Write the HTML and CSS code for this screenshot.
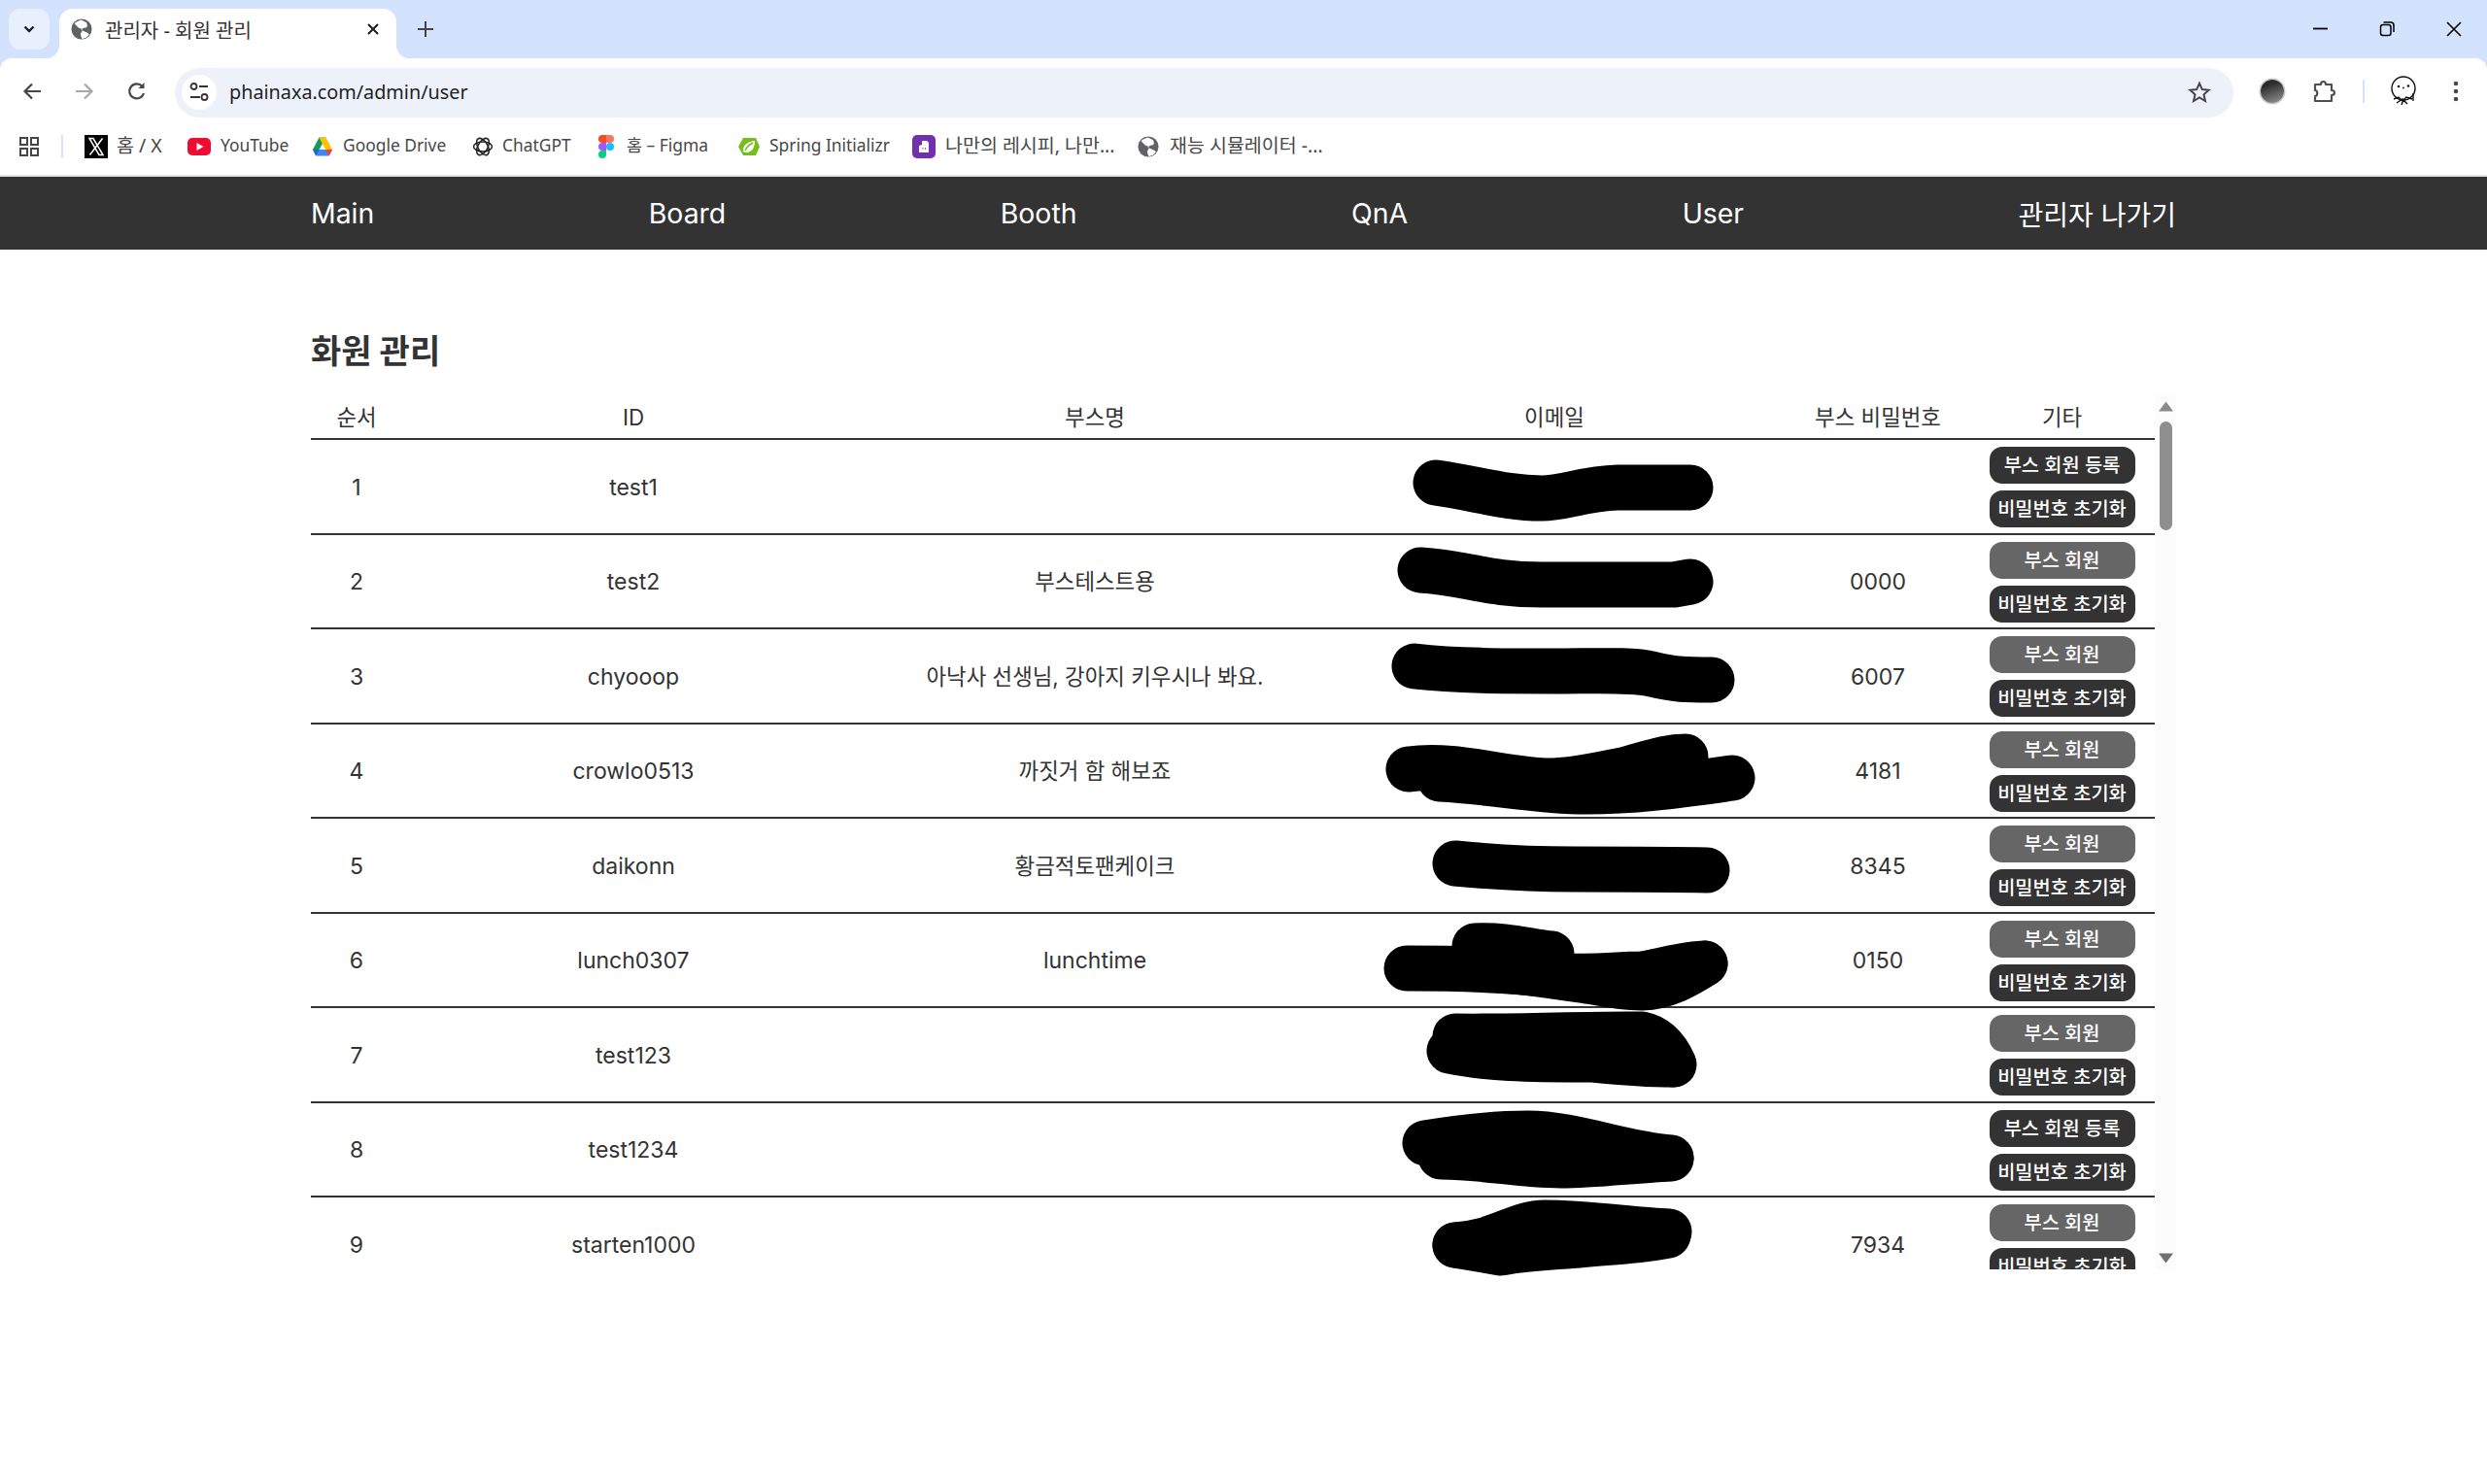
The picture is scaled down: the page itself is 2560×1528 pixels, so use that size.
FILE: index.html
```html
<!DOCTYPE html>
<html lang="ko">
<head>
<meta charset="utf-8">
<title>관리자 - 회원 관리</title>
<link rel="stylesheet" href="styles.css">
</head>
<body>
<svg class="defs" width="0" height="0" aria-hidden="true">
  <symbol id="globe" viewBox="0 0 24 24">
    <circle cx="12" cy="12" r="11.5" fill="#5f6368"/>
    <path d="M11 1.5C8 3 5.5 3.5 4 5.5 6 8 7 8.5 8 10c1.5 1 4 1 5 3 0 2-2.500 3-2 5 0 2 1 3.500 1.500 5 3-.5 6-2 8-5-1-2-3.500-2.500-5.500-3.500-1.500-1-3.500-.5-3.500-2.500 2-1 4-2 6-2 1-.5 1-3.500 0-5.500-2-1-4-2.500-6.500-3z" fill="#fff"/>
  </symbol>
</svg>

<header class="browser">
  <div class="tabstrip">
    <div class="tabsearch"><svg class="ico" width="16" height="16" viewBox="0 0 16 16"><path d="M3.500 5.500l4.500 4.500 4.500-4.500" fill="none" stroke="#1f1f1f" stroke-width="2.400"/></svg></div>
    <div class="tab">
      <svg class="favicon" width="22" height="22"><use href="#globe"/></svg>
      <span class="tabtitle">관리자 - 회원 관리</span>
      <svg class="tabclose" width="14" height="14" viewBox="0 0 14 14"><path d="M2 2l10 10M12 2L2 12" stroke="#1f1f1f" stroke-width="2"/></svg>
    </div>
    <svg class="newtab" width="18" height="18" viewBox="0 0 18 18"><path d="M9 1v16M1 9h16" stroke="#444" stroke-width="2"/></svg>
    <div class="winctrls">
      <div class="winbtn"><svg width="16" height="16" viewBox="0 0 16 16"><path d="M1 7.500h15" stroke="#000" stroke-width="1.800"/></svg></div>
      <div class="winbtn"><svg width="16" height="16" viewBox="0 0 16 16"><rect x="1.500" y="3.500" width="10.500" height="11" rx="2.500" fill="none" stroke="#000" stroke-width="1.500"/><path d="M4.500 1h7.500a3 3 0 0 1 3 3v7" fill="none" stroke="#000" stroke-width="1.500"/></svg></div>
      <div class="winbtn"><svg width="16" height="16" viewBox="0 0 16 16"><path d="M1 1l14 14M15 1L1 15" stroke="#000" stroke-width="1.600"/></svg></div>
    </div>
  </div>

  <div class="toolbar">
    <div class="tbtn"><svg width="24" height="24" viewBox="0 0 24 24"><path d="M21 12H5M12 4.500L4.500 12l7.500 7.500" fill="none" stroke="#474747" stroke-width="2.200"/></svg></div>
    <div class="tbtn"><svg width="24" height="24" viewBox="0 0 24 24"><path d="M3 12h16M12 4.500l7.500 7.500-7.500 7.500" fill="none" stroke="#a8a8a8" stroke-width="2.200"/></svg></div>
    <div class="tbtn"><svg width="24" height="24" viewBox="0 0 24 24"><path d="M19 14a7.500 7.500 0 1 1-1.500-7" fill="none" stroke="#474747" stroke-width="2.200"/><path d="M19.500 3v6h-6z" fill="#474747"/></svg></div>
    <div class="omnibox">
      <div class="siteinfo"><svg width="20" height="22" viewBox="0 0 20 22"><circle cx="4.500" cy="5" r="3" fill="none" stroke="#333" stroke-width="1.800"/><path d="M10 5h9M1 16h10" stroke="#333" stroke-width="2"/><circle cx="15.500" cy="16" r="3" fill="none" stroke="#333" stroke-width="1.800"/></svg></div>
      <span class="url">phainaxa.com/admin/user</span>
      <svg class="star" width="24" height="24" viewBox="0 0 24 24"><path d="M12 2.800l2.800 6.300 6.800.7-5.100 4.500 1.500 6.700-6-3.500-6 3.500 1.500-6.700L2.400 9.800l6.800-.7z" fill="none" stroke="#474747" stroke-width="2"/></svg>
    </div>
    <div class="tbtn tbtn-first"><span class="extdot"></span></div>
    <div class="tbtn"><svg width="26" height="26" viewBox="0 0 26 26"><path d="M3 6h6c0-4 5-4 5 0h6v6c4 0 4 5 0 5v6H3v-5c3 0 3-6 0-6z" fill="none" stroke="#505050" stroke-width="2.200" stroke-linejoin="round"/></svg></div>
    <span class="tbdivider"></span>
    <div class="tbtn"><svg width="30" height="32" viewBox="0 0 30 32"><circle cx="15" cy="13" r="12" fill="#fff" stroke="#111" stroke-width="1.400"/><circle cx="10" cy="11" r="1.300" fill="#111"/><circle cx="20" cy="10.500" r="1.300" fill="#111"/><circle cx="15" cy="12.500" r=".9" fill="#111"/><path d="M5 24l5-2 4 4 4-4 6 2M8 28l6-4 5 5M15 24l-2 6M25 18v8" fill="none" stroke="#111" stroke-width="1.400"/></svg></div>
    <div class="tbtn"><svg width="8" height="24" viewBox="0 0 8 24"><circle cx="4" cy="4" r="2.300" fill="#474747"/><circle cx="4" cy="12" r="2.300" fill="#474747"/><circle cx="4" cy="20" r="2.300" fill="#474747"/></svg></div>
  </div>

  <nav class="bookmarks">
    <svg class="apps" width="20" height="20" viewBox="0 0 20 20"><g fill="none" stroke="#474747" stroke-width="2"><rect x="1" y="1" width="7" height="7"/><rect x="12" y="1" width="7" height="7"/><rect x="1" y="12" width="7" height="7"/><rect x="12" y="12" width="7" height="7"/></g></svg>
    <span class="bmdivider"></span>
    <div class="bm bm-x"><svg width="24" height="24" viewBox="0 0 24 24"><rect width="24" height="24" fill="#000"/><path d="M5 3.500h4l10 17h-4zM18.500 3.500L5.500 20.500" fill="none" stroke="#fff" stroke-width="1.500"/></svg><span class="bmko">홈 / X</span></div>
    <div class="bm bm-yt"><svg width="24" height="24" viewBox="0 0 24 24"><rect y="3" width="24" height="18" rx="5" fill="#f00b32"/><path d="M9.500 8l7 4-7 4z" fill="#fff"/></svg><span>YouTube</span></div>
    <div class="bm bm-dr"><svg width="22" height="22" viewBox="0 0 22 22"><path d="M7.500 1.500h7L7.500 14H1z" fill="#0f9d58"/><path d="M14.500 1.500L21 14h-7L7.500 1.500z" fill="#ffc107"/><path d="M1 14h20l-3.300 6.500H4.300z" fill="#4285f4"/><path d="M1 14h6.500l-3.200 6.500z" fill="#1967d2"/><path d="M14 14h7l-3.300 6.500z" fill="#ea4335"/></svg><span>Google Drive</span></div>
    <div class="bm bm-gpt"><svg width="22" height="22" viewBox="0 0 22 22"><g fill="none" stroke="#222" stroke-width="1.500"><ellipse cx="11" cy="11" rx="9.500" ry="5"/><ellipse cx="11" cy="11" rx="9.500" ry="5" transform="rotate(60 11 11)"/><ellipse cx="11" cy="11" rx="9.500" ry="5" transform="rotate(120 11 11)"/></g></svg><span>ChatGPT</span></div>
    <div class="bm bm-fg"><svg width="16" height="24" viewBox="0 0 16 24"><path d="M8 0H4a4 4 0 0 0 0 8h4z" fill="#f24e1e"/><path d="M8 0h4a4 4 0 0 1 0 8H8z" fill="#ff7262"/><path d="M8 8H4a4 4 0 0 0 0 8h4z" fill="#a259ff"/><circle cx="12" cy="12" r="4" fill="#1abcfe"/><path d="M8 16H4a4 4 0 1 0 4 4z" fill="#0acf83"/></svg><span>홈 – Figma</span></div>
    <div class="bm bm-sp"><svg width="24" height="24" viewBox="0 0 24 24"><path d="M6 3h13l4 9-4 9H6l-5-9z" fill="#77bc1f"/><path d="M6 17c-1-6 4-10 12-11 0 7-3 12-9 12-2 0-3-1-3-1z" fill="#fff"/><path d="M8 16c2-4 4-6 8-8" stroke="#77bc1f" stroke-width="1.500" fill="none"/></svg><span>Spring Initializr</span></div>
    <div class="bm bm-re"><svg width="24" height="24" viewBox="0 0 24 24"><rect width="24" height="24" rx="5" fill="#7030b0"/><path d="M7 18v-7l3-1V6h5l2 2v10z" fill="#fff"/><path d="M10.500 14h1M13 14h1" stroke="#7030b0" stroke-width="1.500"/></svg><span class="bmko">나만의 레시피, 나만...</span></div>
    <div class="bm bm-gl"><svg width="22" height="22"><use href="#globe"/></svg><span class="bmko">재능 시뮬레이터 -...</span></div>
  </nav>
</header>

<nav class="sitenav">
  <a>Main</a><a>Board</a><a>Booth</a><a>QnA</a><a>User</a><a class="navko">관리자 나가기</a>
</nav>

<main class="content">
  <h1 class="pagetitle">화원 관리</h1>
  <div class="tablebox">
    <div class="tablescroll">
      <table class="users">
        <colgroup><col class="c1"><col class="c2"><col class="c3"><col class="c4"><col class="c5"><col class="c6"></colgroup>
        <thead><tr><th class="ko">순서</th><th>ID</th><th class="ko">부스명</th><th class="ko">이메일</th><th class="ko">부스 비밀번호</th><th class="ko">기타</th></tr></thead>
        <tbody>
          <tr><td>1</td><td>test1</td><td class="ko"></td><td></td><td></td><td><div class="acts"><button class="btn">부스 회원 등록</button><button class="btn">비밀번호 초기화</button></div></td></tr>
          <tr><td>2</td><td>test2</td><td class="ko">부스테스트용</td><td></td><td>0000</td><td><div class="acts"><button class="btn off">부스 회원</button><button class="btn">비밀번호 초기화</button></div></td></tr>
          <tr><td>3</td><td>chyooop</td><td class="ko">아낙사 선생님, 강아지 키우시나 봐요.</td><td></td><td>6007</td><td><div class="acts"><button class="btn off">부스 회원</button><button class="btn">비밀번호 초기화</button></div></td></tr>
          <tr><td>4</td><td>crowlo0513</td><td class="ko">까짓거 함 해보죠</td><td></td><td>4181</td><td><div class="acts"><button class="btn off">부스 회원</button><button class="btn">비밀번호 초기화</button></div></td></tr>
          <tr><td>5</td><td>daikonn</td><td class="ko">황금적토팬케이크</td><td></td><td>8345</td><td><div class="acts"><button class="btn off">부스 회원</button><button class="btn">비밀번호 초기화</button></div></td></tr>
          <tr><td>6</td><td>lunch0307</td><td>lunchtime</td><td></td><td>0150</td><td><div class="acts"><button class="btn off">부스 회원</button><button class="btn">비밀번호 초기화</button></div></td></tr>
          <tr><td>7</td><td>test123</td><td class="ko"></td><td></td><td></td><td><div class="acts"><button class="btn off">부스 회원</button><button class="btn">비밀번호 초기화</button></div></td></tr>
          <tr><td>8</td><td>test1234</td><td class="ko"></td><td></td><td></td><td><div class="acts"><button class="btn">부스 회원 등록</button><button class="btn">비밀번호 초기화</button></div></td></tr>
          <tr><td>9</td><td>starten1000</td><td class="ko"></td><td></td><td>7934</td><td><div class="acts"><button class="btn off">부스 회원</button><button class="btn">비밀번호 초기화</button></div></td></tr>
        </tbody>
      </table>
    </div>
    <div class="scrollbar">
      <svg class="arrow" width="15" height="11" viewBox="0 0 15 11"><path d="M7.500 .5L15 10.500H0z" fill="#8a8a8a"/></svg>
      <div class="thumb"></div>
      <svg class="arrow arrow-down" width="15" height="11" viewBox="0 0 15 11"><path d="M7.500 10.500L15 .5H0z" fill="#707070"/></svg>
    </div>
  </div>
</main>

<svg class="scribbles" width="2560" height="1528" viewBox="0 0 2560 1528" aria-hidden="true">
  <g fill="none" stroke="#000" stroke-width="47" stroke-linecap="round" stroke-linejoin="round">
    <path d="M1478 497C1520 503 1550 513 1587 513C1610 513 1630 503 1665 502C1690 502 1710 502 1740 502"/>
    <path d="M1462 587C1510 590 1530 602 1587 602C1640 602 1680 602 1723 602L1740 599"/>
    <path d="M1456 686C1500 691 1550 691 1600 691C1640 691 1680 689 1700 694C1725 700 1735 700 1762 700"/>
    <path d="M1450 792C1500 785 1550 804 1597 804C1620 804 1650 797 1670 793C1700 785 1715 779 1735 779"/>
    <path d="M1482 802C1540 805 1580 815 1633 815C1680 815 1720 810 1783 801"/>
    <path d="M1498 889C1540 893 1570 895 1620 895C1670 895 1720 895 1757 896"/>
    <path d="M1448 997C1500 997 1550 998 1600 1004C1640 1008 1660 1003 1690 1003C1710 1000 1735 992 1755 992"/>
    <path d="M1533 998C1570 1000 1600 1005 1640 1011C1660 1015 1675 1017 1690 1017C1715 1016 1735 1005 1755 992"/>
    <path d="M1518 974C1550 972 1575 980 1597 982"/>
    <path d="M1498 1067C1560 1068 1640 1064 1690 1065C1705 1068 1715 1078 1723 1096"/>
    <path d="M1492 1082C1530 1090 1570 1091 1640 1091C1670 1094 1690 1096 1722 1096"/>
    <path d="M1500 1075L1700 1080"/>
    <path d="M1467 1177C1510 1170 1540 1167 1573 1167C1620 1167 1670 1188 1720 1192"/>
    <path d="M1483 1191C1530 1191 1560 1200 1607 1200C1640 1200 1680 1195 1720 1193"/>
    <path d="M1498 1282C1540 1280 1560 1259 1590 1259C1630 1259 1680 1266 1718 1268"/>
    <path d="M1498 1282L1545 1290C1570 1285 1600 1284 1625 1282C1665 1278 1690 1278 1717 1272"/>
  </g>
</svg>
</body>
</html>
```
FILE: styles.css
```css
* { box-sizing: border-box; }
html, body { margin: 0; padding: 0; }
body {
  background: #fff;
  color: #333;
  font-family: Inter, "Noto Sans CJK KR", sans-serif;
  width: 2560px;
  height: 1528px;
  overflow: hidden;
  position: relative;
}
.defs { position: absolute; }
svg { display: block; flex: none; }

/* browser chrome */
.browser {
  font-family: "Noto Sans", "Noto Sans CJK KR", sans-serif;
  height: 182px;
  background: #d3e3fd;
  display: flex;
  flex-direction: column;
}
.tabstrip {
  height: 60px;
  display: flex;
  align-items: flex-end;
  padding-left: 9px;
  flex: none;
}
.tabsearch {
  width: 42px;
  height: 42px;
  margin-bottom: 9px;
  border-radius: 12px;
  background: #e8f0fe;
  display: flex;
  align-items: center;
  justify-content: center;
}
.tab {
  width: 347px;
  height: 51px;
  margin-left: 10px;
  background: #fff;
  border-radius: 14px 14px 0 0;
  display: flex;
  align-items: center;
  padding: 0 17px 9px 12px;
  position: relative;
}
.tab::before, .tab::after {
  content: "";
  position: absolute;
  bottom: 0;
  width: 14px;
  height: 14px;
}
.tab::before { left: -14px; background: radial-gradient(circle at 0 0, transparent 14px, #fff 14.500px); }
.tab::after { right: -14px; background: radial-gradient(circle at 100% 0, transparent 14px, #fff 14.500px); }
.tabtitle { font-size: 20px; color: #333; margin-left: 13px; white-space: nowrap; }
.tabclose { margin-left: auto; }
.newtab { margin: 0 0 21px 21px; }
.winctrls { margin-left: auto; display: flex; align-self: stretch; }
.winbtn { width: 69px; height: 60px; display: flex; align-items: center; justify-content: center; }

.toolbar {
  height: 68px;
  background: #fff;
  border-radius: 12px 12px 0 0;
  display: flex;
  align-items: center;
  padding: 0 5px 0 6px;
  flex: none;
}
.tbtn { width: 54px; height: 50px; display: flex; align-items: center; justify-content: center; flex: none; }
.tbtn-first { margin-left: 13px; }
.omnibox {
  width: 2119px;
  height: 51px;
  margin: 2px 0 0 12px;
  border-radius: 26px;
  background: #ecf1fa;
  display: flex;
  align-items: center;
  padding: 0 23px 0 7px;
  flex: none;
}
.siteinfo {
  width: 36px;
  height: 36px;
  border-radius: 50%;
  background: #fff;
  display: flex;
  align-items: center;
  justify-content: center;
}
.url { font-size: 19.800px; color: #1f1f1f; margin: 0 0 2px 13px; }
.star { margin-left: auto; }
.extdot {
  width: 24px;
  height: 24px;
  border-radius: 50%;
  background: linear-gradient(160deg, #2b2b2b 25%, #8a8a8a 90%);
  box-shadow: 0 0 0 1.500px #c8c8c8;
}
.tbdivider { width: 2px; height: 24px; background: #d3e3fd; margin: 0 13px 0 12px; flex: none; }

.bookmarks {
  height: 52px;
  background: #fff;
  display: flex;
  align-items: center;
  padding: 0 0 8px 20px;
  font-size: 17.400px;
  color: #474747;
  flex: 1;
  box-shadow: inset 0 -2px 0 #e3e3e3;
}
.apps { margin-right: 23px; }
.bmdivider { width: 2px; height: 24px; background: #d3e3fd; margin-right: 22px; }
.bm { display: flex; align-items: center; gap: 9px; white-space: nowrap; flex: none; }
.bm span { margin-bottom: 5px; }
.bmko { font-size: 19.500px; }
.bm-x { width: 106px; }
.bm-yt { width: 128px; gap: 10px; }
.bm-dr { width: 165px; gap: 10px; }
.bm-gpt { width: 130px; }
.bm-fg { width: 143px; gap: 13px; }
.bm-sp { width: 180px; }
.bm-re { width: 232px; gap: 10px; }
.bm-gl { gap: 11px; }

/* site */
.sitenav {
  height: 75px;
  background: #333;
  color: #fff;
  display: flex;
  justify-content: space-between;
  align-items: center;
  padding: 0 320px;
  font-size: 28.400px;
}
.navko { font-size: 28px; }
.content { padding: 0 320px; }
.pagetitle {
  margin: 0;
  height: 150px;
  padding-top: 80px;
  font-size: 34px;
  line-height: 50px;
  font-weight: 700;
  color: #333;
}
.tablebox { display: flex; width: 1921px; height: 900px; }
.tablescroll { width: 1898px; overflow: hidden; height: 900px; flex: none; }
.users { width: 1898px; table-layout: fixed; border-collapse: collapse; font-size: 23px; color: #333; }
.c1 { width: 94px; } .c2 { width: 476px; } .c3 { width: 474px; } .c4 { width: 472px; } .c5 { width: 194px; } .c6 { width: 188px; }
.users th { height: 45px; font-weight: 400; font-size: 22.400px; padding: 0; border-bottom: 2px solid #333; text-align: center; }
.users th.ko { padding-bottom: 3px; }
.users td { height: 97.500px; padding: 2px 0 0; border-bottom: 2px solid #333; text-align: center; }
.users td.ko { padding: 0 0 2px; font-size: 22.400px; }
.users th:last-child, .users td:last-child { padding-right: 3px; }
.acts { display: flex; flex-direction: column; gap: 7px; align-items: center; }
.btn {
  width: 150px;
  height: 38px;
  border: 0;
  padding: 0;
  border-radius: 13px;
  background: #333;
  color: #fff;
  font-family: Inter, "Noto Sans CJK KR", sans-serif;
  font-size: 19.800px;
  font-weight: 500;
  line-height: 38px;
  white-space: nowrap;
}
.off { background: #666; }
.scrollbar {
  width: 23px;
  background: #fcfcfc;
  display: flex;
  flex-direction: column;
  align-items: center;
  padding-top: 6px;
  position: relative;
}
.thumb { width: 13px; height: 112px; margin-top: 10px; border-radius: 7px; background: #8f8f8f; }
.arrow-down { margin-top: auto; margin-bottom: 6px; }

.scribbles { position: absolute; left: 0; top: 0; pointer-events: none; }
```
